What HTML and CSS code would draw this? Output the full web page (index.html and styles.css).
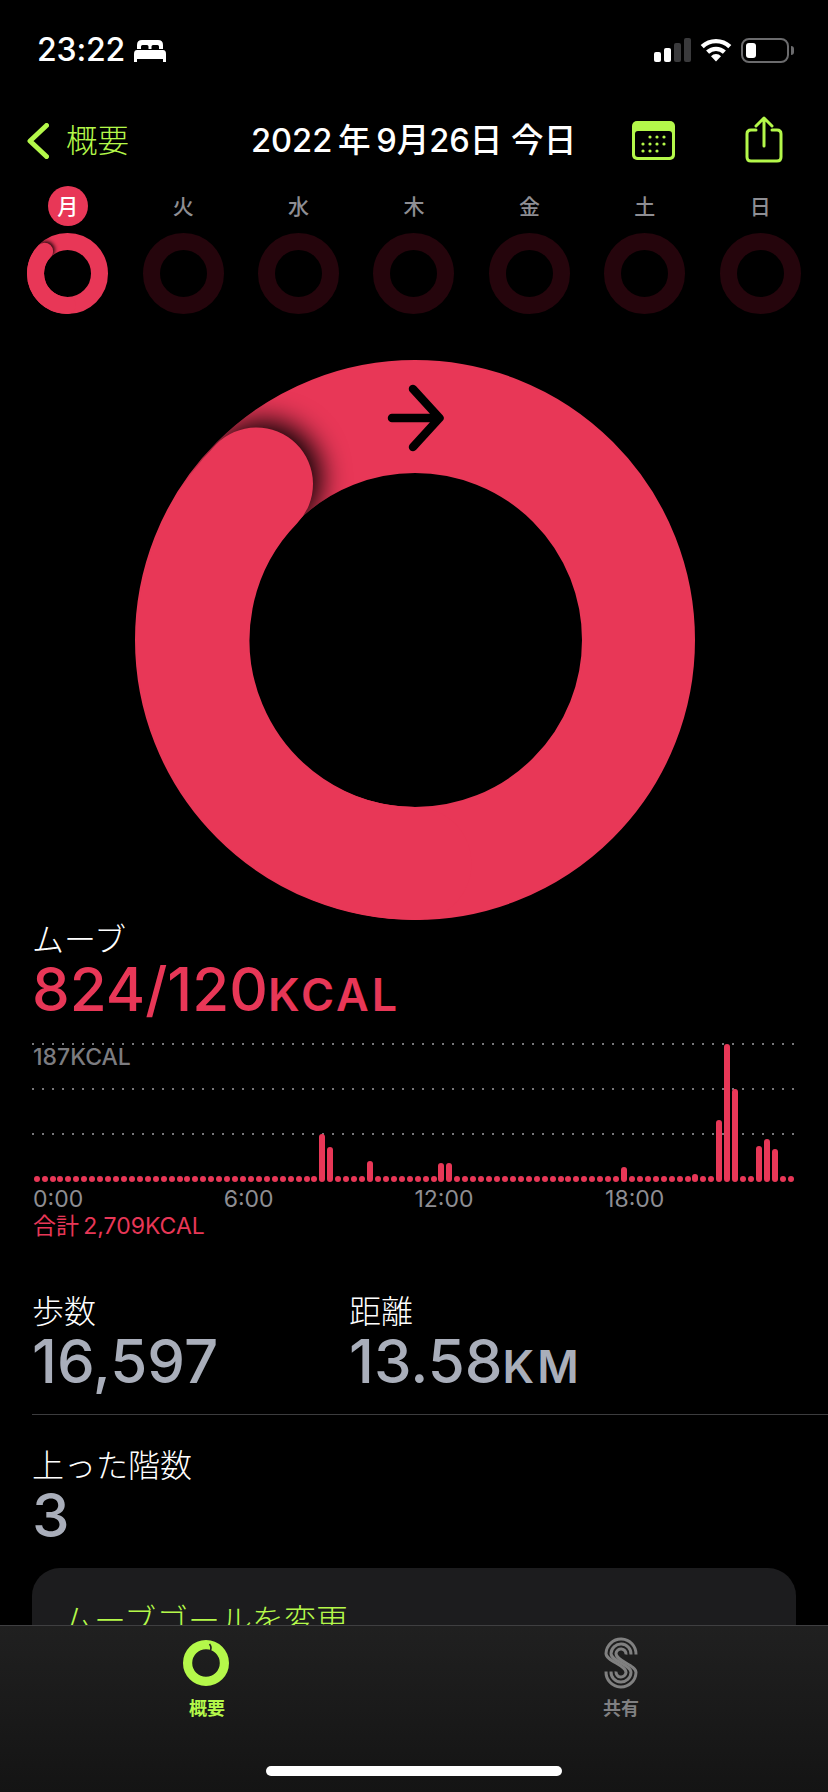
FILE: index.html
```html
<!DOCTYPE html>
<html lang="ja">
<head>
<meta charset="utf-8">
<title>アクティビティ</title>
<link rel="stylesheet" href="styles.css">
</head>
<body>
<div class="phone">
  <main class="scroll">
    <header class="status">
      <div class="status-left">
        <span class="time">23:22</span>
        <svg class="bed" viewBox="0 0 32 23"><path fill-rule="evenodd" d="M3 10V6Q3 1 8 1H24Q29 1 29 6V10H25V7.5Q25 6 23.5 6H19Q17.5 6 17.5 7.5V10H14.5V7.5Q14.5 6 13 6H8.5Q7 6 7 7.5V10Z"/><path d="M3 11H29Q32 11 32 15V23H29V20H3V23H0V15Q0 11 3 11Z"/></svg>
      </div>
      <div class="status-right">
        <div class="signal"><i class="s1"></i><i class="s2"></i><i class="s3"></i><i class="s4"></i></div>
        <svg class="wifi" viewBox="0 0 32 24"><path class="wave" d="M2.2 8.6A20 20 0 0 1 29.8 8.6"/><path class="wave" d="M7.6 14.2A12.3 12.3 0 0 1 24.4 14.2"/><path class="tip" d="M11 18.2A7 7 0 0 1 21 18.2L16 23.6Z"/></svg>
        <div class="battery"><div class="battery-body"><i class="battery-fill"></i></div><i class="battery-nub"></i></div>
      </div>
    </header>

    <nav class="nav">
      <div class="back">
        <svg class="chevron" viewBox="0 0 22 36"><path d="M19.5 2.5L3 18L19.5 33.5"/></svg>
        <span class="back-label">概要</span>
      </div>
      <h1 class="title">2022&#8201;年&#8201;9月26日 今日</h1>
      <svg class="calendar" viewBox="0 0 43 39"><rect class="cal-frame" width="43" height="39" rx="5"/><rect class="cal-inner" x="3" y="10" width="37" height="26" rx="3"/><g class="cal-dots"><circle cx="18" cy="16" r="1.6"/><circle cx="25" cy="16" r="1.6"/><circle cx="32" cy="16" r="1.6"/><circle cx="11" cy="23" r="1.6"/><circle cx="18" cy="23" r="1.6"/><circle cx="25" cy="23" r="1.6"/><circle cx="32" cy="23" r="1.6"/><circle cx="11" cy="30" r="1.6"/><circle cx="18" cy="30" r="1.6"/><circle cx="25" cy="30" r="1.6"/></g></svg>
      <svg class="share" viewBox="0 0 38 48"><path d="M11 15H6Q2 15 2 19V42Q2 46 6 46H32Q36 46 36 42V19Q36 15 32 15H27"/><path d="M19 31V3M11 11L19 3L27 11"/></svg>
    </nav>

    <section class="week">
      <div class="day">
        <span class="day-label today">月</span>
        <svg class="mini" viewBox="0 0 81 81">
          <defs>
            <mask id="miniMask" maskUnits="userSpaceOnUse" x="0" y="0" width="81" height="81"><circle class="mask-mini" cx="40.5" cy="40.5" r="32"/></mask>
            <filter id="miniBlur" x="-100%" y="-100%" width="300%" height="300%"><feGaussianBlur stdDeviation="2"/></filter>
          </defs>
          <circle class="mini-full" cx="40.5" cy="40.5" r="32"/>
          <g mask="url(#miniMask)"><circle class="shade" cx="19" cy="17" r="8.5" filter="url(#miniBlur)"/></g>
          <path class="mini-tail" d="M40.5 72.5A32 32 0 0 1 17.6 18.2"/>
        </svg>
      </div>
      <div class="day"><span class="day-label">火</span><svg class="mini" viewBox="0 0 81 81"><circle class="mini-empty" cx="40.5" cy="40.5" r="32"/></svg></div>
      <div class="day"><span class="day-label">水</span><svg class="mini" viewBox="0 0 81 81"><circle class="mini-empty" cx="40.5" cy="40.5" r="32"/></svg></div>
      <div class="day"><span class="day-label">木</span><svg class="mini" viewBox="0 0 81 81"><circle class="mini-empty" cx="40.5" cy="40.5" r="32"/></svg></div>
      <div class="day"><span class="day-label">金</span><svg class="mini" viewBox="0 0 81 81"><circle class="mini-empty" cx="40.5" cy="40.5" r="32"/></svg></div>
      <div class="day"><span class="day-label">土</span><svg class="mini" viewBox="0 0 81 81"><circle class="mini-empty" cx="40.5" cy="40.5" r="32"/></svg></div>
      <div class="day"><span class="day-label">日</span><svg class="mini" viewBox="0 0 81 81"><circle class="mini-empty" cx="40.5" cy="40.5" r="32"/></svg></div>
    </section>

    <svg class="big-ring" viewBox="0 0 560 560">
      <defs>
        <mask id="ringMask" maskUnits="userSpaceOnUse" x="0" y="0" width="560" height="560"><circle class="mask-big" cx="280" cy="280" r="223.5"/></mask>
        <filter id="ringBlur" filterUnits="userSpaceOnUse" x="0" y="0" width="560" height="560"><feGaussianBlur stdDeviation="14"/></filter>
      </defs>
      <circle class="big-full" cx="280" cy="280" r="223.5"/>
      <g mask="url(#ringMask)"><circle class="shade" cx="129" cy="118" r="57" filter="url(#ringBlur)"/></g>
      <path class="big-tail" d="M280 503.5A223.5 223.5 0 0 1 121.5 124"/>
      <path class="big-arrow" d="M257 58H304.500M278 29L304.500 58L278 87"/>
    </svg>

    <section class="move">
      <div class="label">ムーブ</div>
      <div class="value red">824/120<span class="unit">KCAL</span></div>
      <div class="chart">
        <div class="grid-lines">
          <div class="grid-line"></div>
          <div class="grid-line"></div>
          <div class="grid-line"></div>
        </div>
        <div class="chart-max">187KCAL</div>
        <div class="bars">
          <i class="bar"></i><i class="bar"></i><i class="bar"></i><i class="bar"></i><i class="bar"></i><i class="bar"></i><i class="bar"></i><i class="bar"></i><i class="bar"></i><i class="bar"></i><i class="bar"></i><i class="bar"></i>
          <i class="bar"></i><i class="bar"></i><i class="bar"></i><i class="bar"></i><i class="bar"></i><i class="bar"></i><i class="bar"></i><i class="bar"></i><i class="bar"></i><i class="bar"></i><i class="bar"></i><i class="bar"></i>
          <i class="bar"></i><i class="bar"></i><i class="bar"></i><i class="bar"></i><i class="bar"></i><i class="bar"></i><i class="bar"></i><i class="bar"></i><i class="bar"></i><i class="bar"></i><i class="bar"></i><i class="bar"></i>
          <i class="bar" style="height:48px"></i><i class="bar" style="height:35px"></i><i class="bar"></i><i class="bar"></i><i class="bar"></i><i class="bar"></i><i class="bar" style="height:21px"></i><i class="bar"></i><i class="bar"></i><i class="bar"></i><i class="bar"></i><i class="bar"></i>
          <i class="bar"></i><i class="bar"></i><i class="bar"></i><i class="bar" style="height:19px"></i><i class="bar" style="height:19px"></i><i class="bar"></i><i class="bar"></i><i class="bar"></i><i class="bar"></i><i class="bar"></i><i class="bar"></i><i class="bar"></i>
          <i class="bar"></i><i class="bar"></i><i class="bar"></i><i class="bar"></i><i class="bar"></i><i class="bar"></i><i class="bar"></i><i class="bar"></i><i class="bar"></i><i class="bar"></i><i class="bar"></i><i class="bar"></i>
          <i class="bar"></i><i class="bar"></i><i class="bar" style="height:15px"></i><i class="bar"></i><i class="bar"></i><i class="bar"></i><i class="bar"></i><i class="bar"></i><i class="bar"></i><i class="bar"></i><i class="bar"></i><i class="bar" style="height:8px"></i>
          <i class="bar"></i><i class="bar"></i><i class="bar" style="height:62px"></i><i class="bar" style="height:138px"></i><i class="bar" style="height:93px"></i><i class="bar"></i><i class="bar"></i><i class="bar" style="height:36px"></i><i class="bar" style="height:43px"></i><i class="bar" style="height:33px"></i><i class="bar"></i><i class="bar"></i>
        </div>
      </div>
      <div class="axis"><span>0:00</span><span>6:00</span><span>12:00</span><span>18:00</span></div>
      <div class="total">合計&#8201;2,709KCAL</div>
    </section>

    <section class="stats">
      <div class="stat">
        <div class="label">歩数</div>
        <div class="value grey">16,597</div>
      </div>
      <div class="stat">
        <div class="label">距離</div>
        <div class="value grey">13.58<span class="unit">KM</span></div>
      </div>
    </section>
    <div class="divider"></div>
    <section class="floors">
      <div class="label">上った階数</div>
      <div class="value grey">3</div>
    </section>

    <section class="card">
      <div class="card-link">ムーブゴールを変更</div>
    </section>
  </main>

  <footer class="tabbar">
    <div class="tabs">
      <div class="tab active">
        <svg class="tab-icon" viewBox="0 0 52 52"><circle class="tab-ring" cx="25" cy="26" r="18.4"/><path class="tab-gap" d="M28.500 7Q31.500 11 28.500 15"/></svg>
        <span class="tab-label">概要</span>
      </div>
      <div class="tab">
        <svg class="tab-icon" viewBox="0 0 33 52"><g class="sharing"><path d="M31.500 17.500A15 15 0 1 0 1.500 16.500C1.500 24 21.500 28 21.500 35.500A5 5 0 1 1 11.500 34.500"/><path d="M26.500 17.500A10 10 0 1 0 6.500 16.500C6.500 24 26.500 28 26.500 35.500A10 10 0 1 1 6.500 34.500"/><path d="M21.500 17.500A5 5 0 1 0 11.500 16.500C11.500 24 31.500 28 31.500 35.500A15 15 0 1 1 1.500 34.500"/></g></svg>
        <span class="tab-label">共有</span>
      </div>
    </div>
    <div class="home-bar"></div>
  </footer>
</div>
</body>
</html>
```

FILE: styles.css
```css
* { box-sizing: border-box; margin: 0; padding: 0; }
html, body { background: #000; }
body {
  width: 828px;
  height: 1792px;
  overflow: hidden;
  font-family: Inter, "Noto Sans CJK JP", sans-serif;
  color: #fff;
}
.phone { width: 828px; height: 1792px; display: flex; flex-direction: column; }
.scroll { height: 1625px; overflow: hidden; flex: none; }

/* status bar */
.status { height: 100px; display: flex; justify-content: space-between; align-items: center; padding: 0 34px 0 37px; }
.status-left { display: flex; align-items: center; gap: 9px; }
.time { font-size: 32px; font-weight: 500; line-height: 40px; letter-spacing: -0.2px; }
.bed { width: 32px; height: 23px; fill: #fff; display: block; }
.status-right { display: flex; align-items: center; gap: 9px; }
.signal { display: flex; align-items: flex-end; gap: 2.5px; height: 24px; }
.signal i { display: block; width: 7.5px; border-radius: 2px; background: #fff; }
.signal .s1 { height: 10px; }
.signal .s2 { height: 14px; }
.signal .s3 { height: 19px; background: #3a3a3c; }
.signal .s4 { height: 24px; background: #3a3a3c; }
.wifi { width: 32px; height: 24px; display: block; }
.wave { fill: none; stroke: #fff; stroke-width: 4.4; }
.tip { fill: #fff; }
.battery { display: flex; align-items: center; gap: 2px; }
.battery-body { width: 48px; height: 25px; border: 2px solid #6b6b6d; border-radius: 8px; padding: 3px; }
.battery-fill { display: block; width: 10px; height: 100%; background: #fff; border-radius: 3px; }
.battery-nub { display: block; width: 3px; height: 9px; background: #6b6b6d; border-radius: 0 3px 3px 0; }

/* nav */
.nav { height: 81px; display: flex; align-items: center; padding: 0 45px 0 27px; }
.back { display: flex; align-items: center; gap: 17px; width: 224px; flex: none; }
.chevron { width: 22px; height: 36px; fill: none; stroke: #b4f84a; stroke-width: 5; stroke-linecap: round; stroke-linejoin: round; display: block; }
.back-label { font-size: 31.5px; font-weight: 300; color: #b4f84a; line-height: 40px; }
.title { font-size: 32.6px; font-weight: 500; line-height: 38px; padding-bottom: 2px; white-space: nowrap; width: 381px; flex: none; }
.calendar { width: 43px; height: 39px; flex: none; display: block; }
.cal-frame { fill: #b4f84a; }
.cal-inner { fill: #000; }
.cal-dots { fill: #b4f84a; }
.share { width: 38px; height: 48px; margin-left: auto; margin-top: -3px; flex: none; display: block; fill: none; stroke: #b4f84a; stroke-width: 3; stroke-linecap: round; stroke-linejoin: round; }

/* week */
.week { display: grid; grid-template-columns: repeat(7, 1fr); padding: 5px 10px 0; }
.day { display: flex; flex-direction: column; align-items: center; gap: 7px; }
.day-label { width: 40px; height: 40px; border-radius: 50%; display: flex; align-items: center; justify-content: center; padding-bottom: 3px; font-size: 21px; font-weight: 500; color: #8e8e93; }
.day-label.today { background: #e83757; color: #fff; }
.mini { width: 81px; height: 81px; display: block; }
.mini-empty { fill: none; stroke: #25050c; stroke-width: 17; }
.mini-full { fill: none; stroke: #e83757; stroke-width: 17; }
.mini-tail { fill: none; stroke: #e83757; stroke-width: 17; stroke-linecap: round; }
.mask-mini { fill: none; stroke: #fff; stroke-width: 17; }

/* big ring */
.big-ring { width: 560px; height: 560px; display: block; margin: 46px 0 0 134.5px; }
.big-full { fill: none; stroke: #e83757; stroke-width: 113; }
.big-tail { fill: none; stroke: #e83757; stroke-width: 113; stroke-linecap: round; }
.mask-big { fill: none; stroke: #fff; stroke-width: 113; }
.shade { fill: #000; }
.big-arrow { fill: none; stroke: #000; stroke-width: 8.5; stroke-linecap: round; stroke-linejoin: round; }

/* move */
.label { font-size: 32px; font-weight: 300; line-height: 40px; }
.value { font-size: 60px; font-weight: 500; line-height: 58px; white-space: nowrap; }
.unit { font-size: 45px; font-weight: 600; letter-spacing: 3px; }
.red { color: #e83757; }
.grey { color: #a9aeba; }
.move { padding: 0 0 0 32px; }
.chart { width: 764px; height: 139px; margin-top: 19px; display: grid; }
.grid-lines, .chart-max, .bars { grid-area: 1 / 1; }
.grid-lines { display: flex; flex-direction: column; gap: 43px; }
.grid-line { height: 2px; background-image: radial-gradient(circle at 1px 1px, #77777a 0.9px, transparent 1.1px); background-size: 10px 2px; }
.chart-max { align-self: start; font-size: 23px; font-weight: 500; color: #7c7c80; line-height: 26px; padding: 1px 0 0 1px; }
.bars { display: grid; grid-template-columns: repeat(96, 1fr); align-items: end; justify-items: center; padding: 0 1.3px 0 0.7px; }
.bar { display: block; width: 6px; height: 6px; border-radius: 3px; background: #e83757; }
.axis { display: grid; grid-template-columns: repeat(4, 190.7px); font-size: 23px; font-weight: 400; color: #8e8e93; line-height: 28px; margin-top: 3px; padding-left: 1px; }
.total { font-size: 23px; font-weight: 400; color: #e83757; line-height: 28px; margin-top: -1.5px; padding-left: 1px; }

/* stats */
.stats { display: flex; padding: 52px 0 0 32px; }
.stat { width: 317px; }
.divider { height: 1px; margin: 18px 0 0 32px; background: #3c3c3e; }
.floors { padding: 31px 0 0 32px; }

/* card */
.card { margin: 24px 32px 0; height: 140px; border-radius: 28px; background: #1c1c1e; padding: 33px 30px; }
.card-link { font-size: 32px; font-weight: 300; color: #b4f84a; line-height: 40px; }

/* tab bar */
.tabbar { flex: none; height: 167px; border-top: 1px solid #3f3f41; background: linear-gradient(180deg, #202020, #141414); padding-top: 11px; }
.tabs { display: grid; grid-template-columns: 1fr 1fr; height: 129px; }
.tab { display: flex; flex-direction: column; align-items: center; gap: 8px; }
.tab-icon { height: 52px; width: 52px; display: block; }
.tab-ring { fill: none; stroke: #b4f84a; stroke-width: 9.2; }
.tab-gap { fill: none; stroke: #202020; stroke-width: 1.6; }
.sharing { fill: none; stroke: #808080; stroke-width: 3; }
.tab-label { font-size: 18px; font-weight: 700; line-height: 24px; color: #808082; }
.tab.active .tab-label { color: #b4f84a; }
.home-bar { width: 296px; height: 10px; margin: 0 auto; border-radius: 5px; background: #fff; }
```
